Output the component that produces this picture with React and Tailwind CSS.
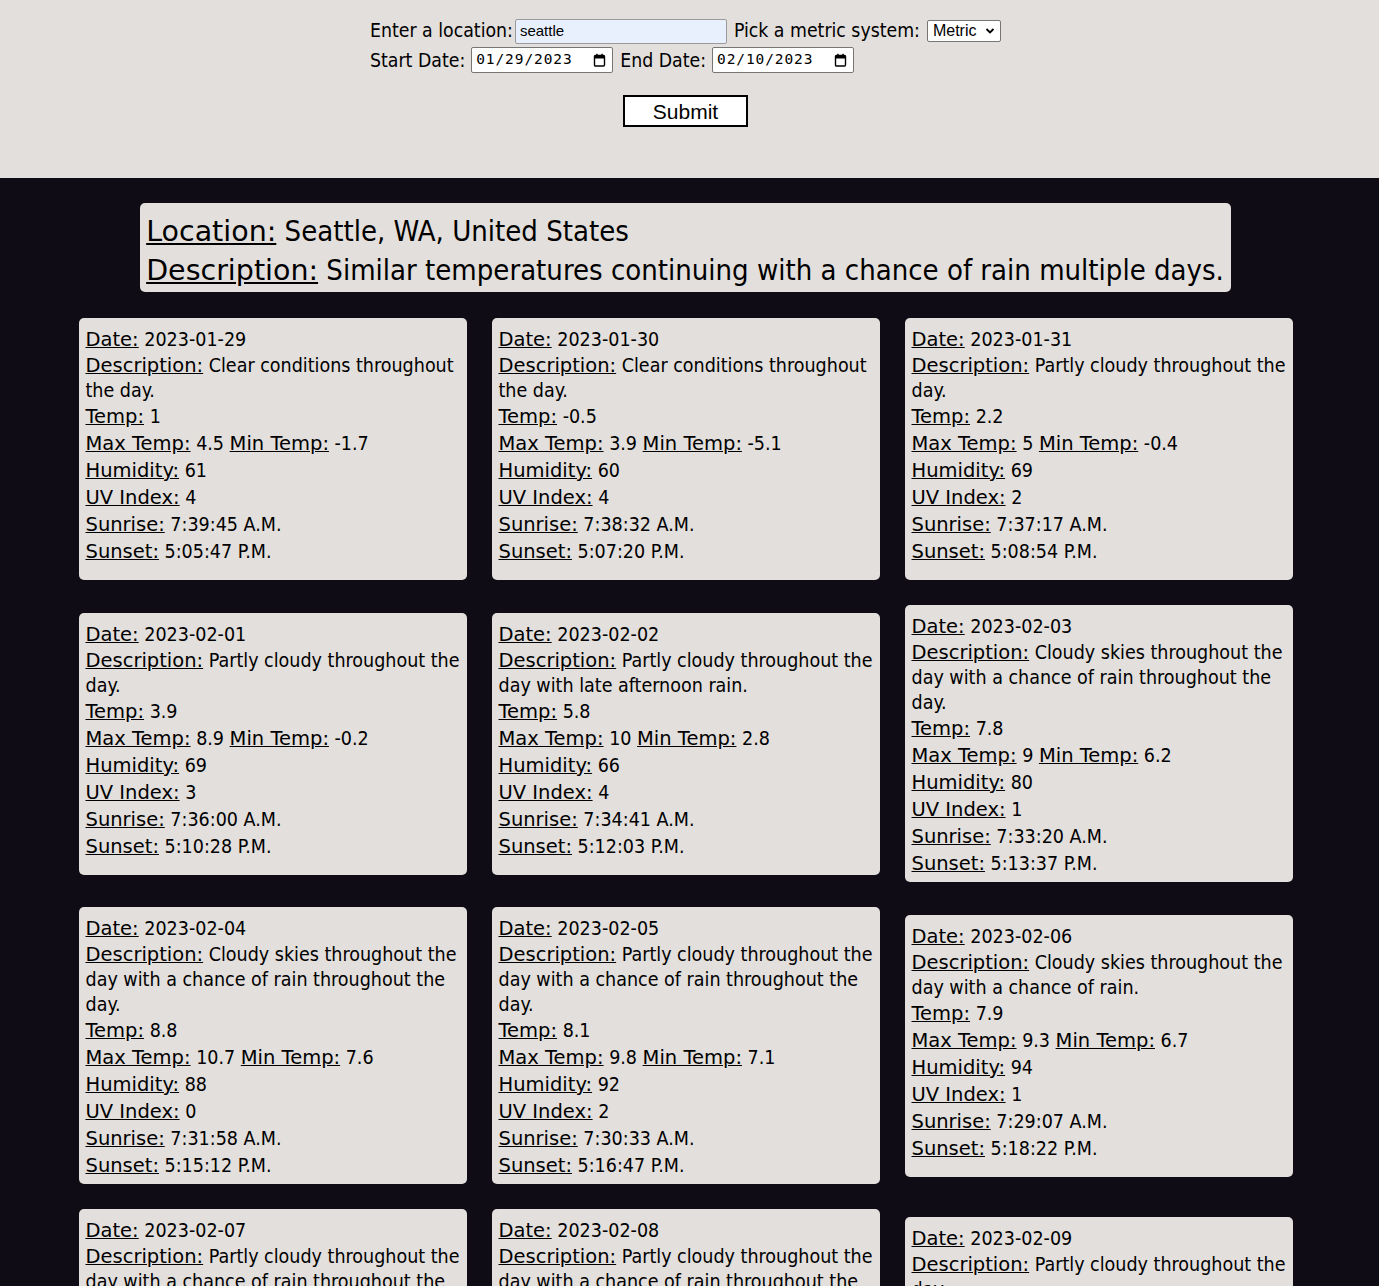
import React from "react";

const FONT = "[font-family:'DejaVu_Sans_Condensed','DejaVu_Sans',sans-serif] font-stretch-condensed";

const days = [
  { date: "2023-01-29", desc: "Clear conditions throughout the day.", temp: "1", max: "4.5", min: "-1.7", hum: "61", uv: "4", rise: "7:39:45 A.M.", set: "5:05:47 P.M." },
  { date: "2023-01-30", desc: "Clear conditions throughout the day.", temp: "-0.5", max: "3.9", min: "-5.1", hum: "60", uv: "4", rise: "7:38:32 A.M.", set: "5:07:20 P.M." },
  { date: "2023-01-31", desc: "Partly cloudy throughout the day.", temp: "2.2", max: "5", min: "-0.4", hum: "69", uv: "2", rise: "7:37:17 A.M.", set: "5:08:54 P.M." },
  { date: "2023-02-01", desc: "Partly cloudy throughout the day.", temp: "3.9", max: "8.9", min: "-0.2", hum: "69", uv: "3", rise: "7:36:00 A.M.", set: "5:10:28 P.M." },
  { date: "2023-02-02", desc: "Partly cloudy throughout the day with late afternoon rain.", temp: "5.8", max: "10", min: "2.8", hum: "66", uv: "4", rise: "7:34:41 A.M.", set: "5:12:03 P.M." },
  { date: "2023-02-03", desc: "Cloudy skies throughout the day with a chance of rain throughout the day.", temp: "7.8", max: "9", min: "6.2", hum: "80", uv: "1", rise: "7:33:20 A.M.", set: "5:13:37 P.M." },
  { date: "2023-02-04", desc: "Cloudy skies throughout the day with a chance of rain throughout the day.", temp: "8.8", max: "10.7", min: "7.6", hum: "88", uv: "0", rise: "7:31:58 A.M.", set: "5:15:12 P.M." },
  { date: "2023-02-05", desc: "Partly cloudy throughout the day with a chance of rain throughout the day.", temp: "8.1", max: "9.8", min: "7.1", hum: "92", uv: "2", rise: "7:30:33 A.M.", set: "5:16:47 P.M." },
  { date: "2023-02-06", desc: "Cloudy skies throughout the day with a chance of rain.", temp: "7.9", max: "9.3", min: "6.7", hum: "94", uv: "1", rise: "7:29:07 A.M.", set: "5:18:22 P.M." },
  { date: "2023-02-07", desc: "Partly cloudy throughout the day with a chance of rain throughout the day.", temp: "7.4", max: "9.6", min: "5.8", hum: "90", uv: "1", rise: "7:27:40 A.M.", set: "5:19:57 P.M." },
  { date: "2023-02-08", desc: "Partly cloudy throughout the day with a chance of rain throughout the day.", temp: "6.9", max: "8.7", min: "5.2", hum: "89", uv: "1", rise: "7:26:11 A.M.", set: "5:21:32 P.M." },
  { date: "2023-02-09", desc: "Partly cloudy throughout the day.", temp: "6.3", max: "9.1", min: "3.9", hum: "84", uv: "2", rise: "7:24:41 A.M.", set: "5:23:06 P.M." },
  { date: "2023-02-10", desc: "Partly cloudy throughout the day.", temp: "5.6", max: "8.4", min: "2.7", hum: "82", uv: "2", rise: "7:23:10 A.M.", set: "5:24:41 P.M." },
];

function L({ children, size = "text-[19.5px]" }) {
  return (
    <span className={`underline [font-family:'DejaVu_Sans',sans-serif] font-stretch-normal ${size}`}>
      {children}
    </span>
  );
}

function Calendar() {
  return (
    <svg width="13" height="14" viewBox="0 0 13 14" className="shrink-0">
      <rect x="1.5" y="2.5" width="10" height="10.5" fill="none" stroke="#000" strokeWidth="1.4" rx="1" />
      <rect x="1.5" y="2.5" width="10" height="3" fill="#000" />
      <rect x="3.2" y="0.8" width="1.5" height="2" fill="#000" />
      <rect x="8.3" y="0.8" width="1.5" height="2" fill="#000" />
    </svg>
  );
}

function DateBox({ value }) {
  return (
    <div className="flex h-[26px] w-[142px] items-center justify-between rounded-[2px] border border-[#767676] bg-white pl-[4px] pr-[6px]">
      <span className="[font-family:'DejaVu_Sans_Mono',monospace] text-[14.5px] tracking-[0.9px] text-black">{value}</span>
      <Calendar />
    </div>
  );
}

function Card({ d }) {
  return (
    <div className={`min-h-[262px] rounded-[5px] bg-[#e3dfdc] pl-[7px] pr-[3px] pt-[8px] pb-[5px] text-[19.5px] text-black ${FONT}`}>
      <div className="leading-[27px]"><L>Date:</L> {d.date}</div>
      <div className="leading-[25px]"><L>Description:</L> {d.desc}</div>
      <div className="leading-[27px]"><L>Temp:</L> {d.temp}</div>
      <div className="leading-[27px]"><L>Max Temp:</L> {d.max} <L>Min Temp:</L> {d.min}</div>
      <div className="leading-[27px]"><L>Humidity:</L> {d.hum}</div>
      <div className="leading-[27px]"><L>UV Index:</L> {d.uv}</div>
      <div className="leading-[27px]"><L>Sunrise:</L> {d.rise}</div>
      <div className="leading-[27px]"><L>Sunset:</L> {d.set}</div>
    </div>
  );
}

export default function App() {
  return (
    <div className="min-h-screen w-full bg-[#0f0c16]">
      <div className={`bg-[#e3dfdc] pr-[8px] pt-[17px] pb-[51px] text-black ${FONT}`}>
        <div className="flex flex-col items-center">
          <div className="flex flex-col text-[19.3px]">
            <div className="flex h-[28px] items-center">
              <span>Enter a location:</span>
              <div className="ml-[2px] flex h-[25px] w-[212px] items-center rounded-[2px] border border-[#9a9a9a] bg-[#e8f0fe] px-[4px] [font-family:'Liberation_Sans',Arial,sans-serif] text-[15px]">seattle</div>
              <span className="ml-[7px]">Pick a metric system:</span>
              <div className="ml-[7px] flex h-[22px] w-[74px] items-center justify-between rounded-[2px] border border-[#767676] bg-white pl-[5px] pr-[5px] [font-family:'Liberation_Sans',Arial,sans-serif] text-[16px]">
                <span>Metric</span>
                <svg width="10" height="8" viewBox="0 0 10 8"><path d="M1.5 2 L5 5.5 L8.5 2" fill="none" stroke="#000" strokeWidth="1.8" /></svg>
              </div>
            </div>
            <div className="flex h-[29px] items-center">
              <span className="pt-[3px]">Start Date:</span>
              <div className="ml-[6px]"><DateBox value="01/29/2023" /></div>
              <span className="ml-[7px] pt-[3px]">End Date:</span>
              <div className="ml-[6px]"><DateBox value="02/10/2023" /></div>
            </div>
          </div>
          <button className="mt-[21px] h-[32px] w-[125px] border-2 border-black bg-white text-[21px] leading-none [font-family:'Liberation_Sans',Arial,sans-serif]">Submit</button>
        </div>
      </div>
      <div className="pr-[8px] pt-[25px] pb-[40px]">
        <div className="flex justify-center">
          <div className={`rounded-[5px] bg-[#e3dfdc] pl-[6px] pr-[7px] pt-[9px] pb-[2px] text-[29px] leading-[39px] text-black ${FONT}`}>
            <div><L size="text-[28.5px]">Location:</L> Seattle, WA, United States</div>
            <div><L size="text-[28.5px]">Description:</L> Similar temperatures continuing with a chance of rain multiple days.</div>
          </div>
        </div>
        <div className="mt-[26px] flex justify-center">
          <div className="grid w-[1214px] grid-cols-3 items-center gap-x-[25px] gap-y-[25px]">
            {days.map((d) => (
              <Card key={d.date} d={d} />
            ))}
          </div>
        </div>
      </div>
    </div>
  );
}
